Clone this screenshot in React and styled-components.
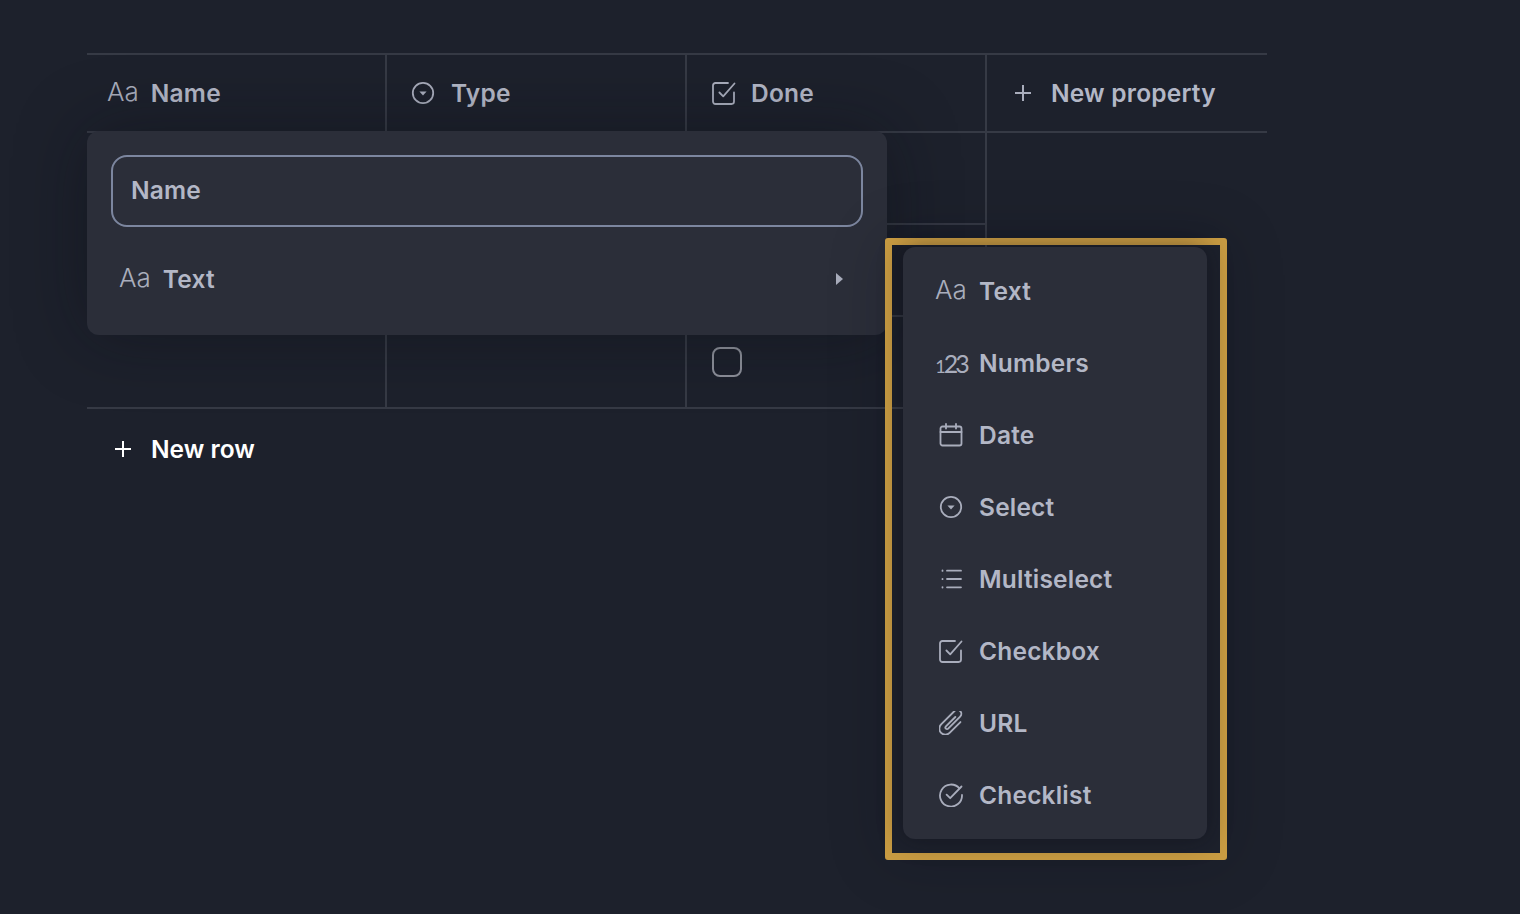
import React from 'react'
import styled, { createGlobalStyle } from 'styled-components'

const GlobalStyle = createGlobalStyle`
	* {
		box-sizing: border-box;
	}
	html,
	body {
		margin: 0;
		height: 100%;
		background: #1c202b;
	}
	body {
		font-family: 'Inter', 'Liberation Sans', sans-serif;
	}
`

const CircleCaret = () => (
	<Svg viewBox="0 0 24 24">
		<circle cx="12" cy="12" r="10.2" />
		<path d="M8.4 10.4h7.2L12 14.4z" fill="currentColor" stroke="none" />
	</Svg>
)

const CheckSquare = () => (
	<Svg viewBox="0 0 24 24">
		<path d="M16 2H3.4A2.4 2.4 0 0 0 1 4.4v16.2A2.4 2.4 0 0 0 3.4 23h16.2a2.4 2.4 0 0 0 2.4-2.4V11.5" />
		<path d="M7.4 11.5l3.8 3.8 11.3-12.8" />
	</Svg>
)

const Calendar = () => (
	<Svg viewBox="0 0 24 24">
		<rect x="1.5" y="3.5" width="21" height="19" rx="2" />
		<path d="M1.5 9h21M7 1v4.5M17 1v4.5" />
	</Svg>
)

const ListLines = () => (
	<Svg viewBox="0 0 24 24">
		<path d="M8 3.7h14M8 12h14M8 20.3h14" />
		<path d="M3.5 3.5v.4M3.5 11.8v.4M3.5 20.1v.4" />
	</Svg>
)

const Clip = () => (
	<Svg viewBox="3 3 18 18" $stroke={1.4}>
		<g transform="rotate(45 12 12)">
			<path d="M16.5 6.5V18a4.5 4.5 0 0 1-9 0V3.8a3 3 0 0 1 6 0V16.5a1.2 1.2 0 0 1-2.4 0V6.5" />
		</g>
	</Svg>
)

const CheckCircle = () => (
	<Svg viewBox="0 0 24 24">
		<path d="M20.4 5.4A11 11 0 1 0 23 12" />
		<path d="M7.6 11.6l3.6 3.6 11.3-11.7" />
	</Svg>
)

const Plus = () => (
	<Svg viewBox="0 0 16 16" $size={16} $stroke={2}>
		<path d="M8 0v16M0 8h16" />
	</Svg>
)

const menuItems = [
	{ label: 'Text', glyph: <Glyph>Aa</Glyph> },
	{ label: 'Numbers', glyph: <NumberGlyph><small>1</small>23</NumberGlyph> },
	{ label: 'Date', glyph: <Calendar /> },
	{ label: 'Select', glyph: <CircleCaret /> },
	{ label: 'Multiselect', glyph: <ListLines /> },
	{ label: 'Checkbox', glyph: <CheckSquare /> },
	{ label: 'URL', glyph: <Clip /> },
	{ label: 'Checklist', glyph: <CheckCircle /> },
]

function Glyph({ children }) {
	return <GlyphText>{children}</GlyphText>
}

function NumberGlyph({ children }) {
	return <NumberText>{children}</NumberText>
}

const App = () => {
	return (
		<>
			<GlobalStyle />
			<Page>
				<Board>
					<HeaderRow>
						<HeaderCell $pad={20}>
							<Glyph>Aa</Glyph>
							<Label $left={12}>Name</Label>
						</HeaderCell>
						<HeaderCell $pad={24}>
							<CircleCaret />
							<Label $left={16}>Type</Label>
						</HeaderCell>
						<HeaderCell $pad={25}>
							<CheckSquare />
							<Label $left={15}>Done</Label>
						</HeaderCell>
						<HeaderCell $pad={28} $last>
							<Plus />
							<Label $left={20}>New property</Label>
						</HeaderCell>
					</HeaderRow>
					{[0, 1, 2].map((row) => (
						<BodyRow key={row}>
							<BodyCell />
							<BodyCell />
							<BodyCell>
								<EmptyBox />
							</BodyCell>
						</BodyRow>
					))}
					<NewRow>
						<Plus />
						<NewRowLabel>New row</NewRowLabel>
					</NewRow>

					<EditPopover>
						<NameInput>Name</NameInput>
						<TypeRow>
							<Glyph>Aa</Glyph>
							<Label $left={12}>Text</Label>
							<Caret />
						</TypeRow>
					</EditPopover>

					<HighlightFrame>
						<TypeMenu>
							{menuItems.map((item) => (
								<MenuItem key={item.label}>
									<MenuIcon>{item.glyph}</MenuIcon>
									<Label>{item.label}</Label>
								</MenuItem>
							))}
						</TypeMenu>
					</HighlightFrame>
				</Board>
			</Page>
		</>
	)
}

export default App

const Page = styled.div`
	min-height: 914px;
	padding: 53px 0 0 87px;
	background: #1d212c;
	overflow: hidden;
`

const Board = styled.div`
	position: relative;
	width: 1180px;
	color: #a9adbc;
`

const Svg = styled.svg`
	display: block;
	flex: none;
	width: ${(p) => p.$size || 24}px;
	height: ${(p) => p.$size || 24}px;
	fill: none;
	stroke: currentColor;
	stroke-width: ${(p) => p.$stroke || 1.8};
	stroke-linecap: round;
	stroke-linejoin: round;
`

const HeaderRow = styled.div`
	display: grid;
	grid-template-columns: 300px 300px 300px 280px;
	height: 80px;
	border-top: 2px solid #363a45;
	border-bottom: 2px solid #363a45;
`

const HeaderCell = styled.div`
	display: flex;
	align-items: center;
	padding-left: ${(p) => p.$pad}px;
	border-right: ${(p) => (p.$last ? 'none' : '2px solid #363a45')};
`

const GlyphText = styled.span`
	padding-bottom: 2px;
	font-size: 26px;
	font-weight: 300;
	line-height: 1;
	color: #a9adbc;
`

const NumberText = styled.span`
	font-family: 'Lato', 'Liberation Sans', sans-serif;
	font-size: 25px;
	font-weight: 400;
	line-height: 1;
	letter-spacing: -3px;
	color: #a9adbc;

	small {
		font-size: 18px;
		margin-right: 1px;
	}
`

const Label = styled.span`
	margin-left: ${(p) => p.$left || 0}px;
	font-size: 24.5px;
	font-weight: 600;
	line-height: 1;
	letter-spacing: 0.2px;
	color: #b3b7c6;
`

const BodyRow = styled.div`
	display: grid;
	grid-template-columns: 300px 300px 300px;
	width: 900px;
	height: 92px;
	border-bottom: 2px solid #363a45;
`

const BodyCell = styled.div`
	display: flex;
	align-items: center;
	padding-left: 25px;
	border-right: 2px solid #363a45;
`

const EmptyBox = styled.div`
	width: 30px;
	height: 30px;
	border: 2px solid #8d909a;
	border-radius: 8px;
`

const NewRow = styled.div`
	display: flex;
	align-items: center;
	height: 80px;
	padding-left: 28px;
	color: #ffffff;
`

const NewRowLabel = styled.span`
	margin-left: 20px;
	font-size: 24.5px;
	font-weight: 600;
	line-height: 1;
	color: #ffffff;
`

const EditPopover = styled.div`
	position: absolute;
	left: 0;
	top: 78px;
	width: 800px;
	height: 204px;
	padding: 24px;
	background: #2b2e39;
	border-radius: 12px;
	box-shadow: 0 0 70px rgba(10, 12, 20, 0.4);
`

const NameInput = styled.div`
	display: flex;
	align-items: center;
	height: 72px;
	padding: 0 0 2px 18px;
	border: 2px solid #7c869f;
	border-radius: 16px;
	font-size: 24.5px;
	font-weight: 600;
	letter-spacing: 0.2px;
	color: #b3b7c6;
`

const TypeRow = styled.div`
	display: flex;
	align-items: center;
	height: 60px;
	margin-top: 22px;
	padding: 0 20px 0 8px;
`

const Caret = styled.div`
	margin-left: auto;
	width: 0;
	height: 0;
	border-top: 6px solid transparent;
	border-bottom: 6px solid transparent;
	border-left: 7px solid #a9adbc;
`

const HighlightFrame = styled.div`
	position: absolute;
	left: 798px;
	top: 185px;
	width: 342px;
	height: 622px;
	padding: 2px 0 0 11px;
	border: 7px solid #c89b42;
	border-radius: 3px;
	box-shadow: 0 0 60px rgba(10, 12, 20, 0.18);
`

const TypeMenu = styled.div`
	width: 304px;
	padding: 8px 0;
	background: #2b2e39;
	border-radius: 12px;
	box-shadow: 0 0 24px rgba(10, 12, 20, 0.45);
`

const MenuItem = styled.div`
	display: flex;
	align-items: center;
	height: 72px;
	padding-left: 33px;
	color: #a9adbc;
`

const MenuIcon = styled.div`
	display: flex;
	align-items: center;
	justify-content: center;
	width: 30px;
	margin-right: 13px;
`
